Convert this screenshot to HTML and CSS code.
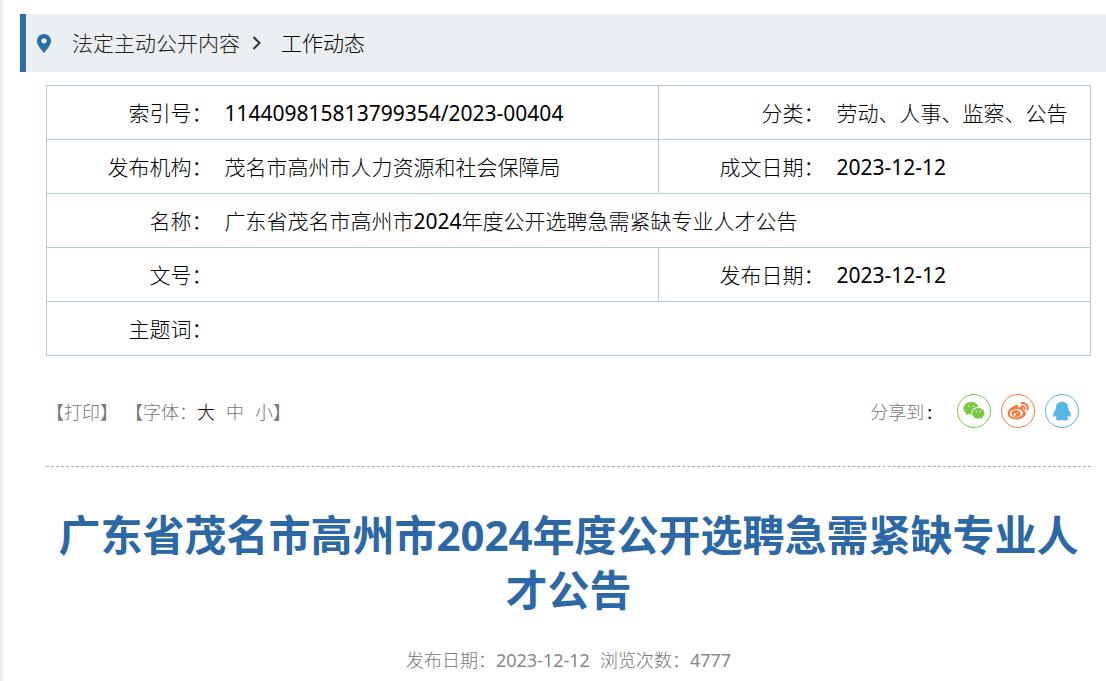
FILE: index.html
```html
<!DOCTYPE html>
<html lang="zh-CN">

<head>
    <meta charset="UTF-8">
    <title>广东省茂名市高州市2024年度公开选聘急需紧缺专业人才公告</title>
    <link rel="stylesheet" href="styles.css">
</head>

<body>
    <nav class="position">
        <svg class="pin" viewBox="0 0 14 19" aria-hidden="true">
            <path fill-rule="evenodd" d="M7 0C3.100 0 0 3 0 6.900c0 4.500 4.500 8.600 7 12.100 2.500-3.500 7-7.600 7-12.100C14 3 10.900 0 7 0zm0 4.200a2.600 2.600 0 1 1 0 5.200 2.600 2.600 0 0 1 0-5.200z"/>
        </svg>
        <a href="#" class="parent">法定主动公开内容</a>
        <svg class="arrow" viewBox="0 0 10 14" aria-hidden="true">
            <path d="M1.500 1l6 6-6 6"/>
        </svg>
        <a href="#" class="current">工作动态</a>
    </nav>

    <div class="content">
        <table class="classify">
            <colgroup>
                <col class="col-label">
                <col>
                <col class="col-label">
                <col class="col-side">
            </colgroup>
            <tr>
                <th scope="row">索引号：</th>
                <td class="num">114409815813799354/2023-00404</td>
                <th scope="row" class="split">分类：</th>
                <td>劳动、人事、监察、公告</td>
            </tr>
            <tr>
                <th scope="row">发布机构：</th>
                <td>茂名市高州市人力资源和社会保障局</td>
                <th scope="row" class="split">成文日期：</th>
                <td class="num">2023-12-12</td>
            </tr>
            <tr>
                <th scope="row">名称：</th>
                <td colspan="3">广东省茂名市高州市<span class="num">2024</span>年度公开选聘急需紧缺专业人才公告</td>
            </tr>
            <tr>
                <th scope="row">文号：</th>
                <td></td>
                <th scope="row" class="split">发布日期：</th>
                <td class="num">2023-12-12</td>
            </tr>
            <tr>
                <th scope="row">主题词：</th>
                <td colspan="3"></td>
            </tr>
        </table>

        <div class="tools">
            <div class="tools-left">
                <button type="button" onclick="window.print()">【打印】</button>
                <div class="font-size">
                    <span>【字体：</span>
                    <button type="button" class="active">大</button>
                    <button type="button">中</button>
                    <span><button type="button">小</button>】</span>
                </div>
            </div>
            <div class="share">
                <span class="share-label">分享到<b>:</b></span>
                <a href="#" class="share-icon wechat" aria-label="微信">
                    <svg viewBox="0 0 22 20">
                        <path fill-rule="evenodd" d="M8 1C3.600 1 .5 3.800.5 7.300c0 2 1.100 3.700 2.800 4.900l-.8 2.400 2.800-1.500c.9.300 1.800.4 2.700.4h.6C7.600 9 11 6 15.300 6h.3C15 3.100 11.900 1 8 1zM5.500 4.400a.8.800 0 1 1 0 1.600.8.800 0 0 1 0-1.600zm5 0a.8.800 0 1 1 0 1.600.8.800 0 0 1 0-1.600z"/>
                        <path fill-rule="evenodd" d="M15.300 6.900c-3.500 0-6.200 2.400-6.200 5.300s2.700 5.300 6.200 5.300c.7 0 1.500-.1 2.100-.4l2.300 1.300-.6-2.100c1.400-1 2.400-2.500 2.400-4.100 0-2.900-2.700-5.300-6.200-5.300zM13.200 9.800a.7.700 0 1 1 0 1.400.7.700 0 0 1 0-1.400zm4.100 0a.7.700 0 1 1 0 1.400.7.700 0 0 1 0-1.400z"/>
                    </svg>
                </a>
                <a href="#" class="share-icon weibo" aria-label="微博">
                    <svg viewBox="0 0 22 20">
                        <path fill-rule="evenodd" d="M8.500 4.300c1.600-.6 2.900.1 2.500 2.200 2.400-1 5-.9 4.500 1.300-.2.900.1 1.100 1 1.500 1.500.6 2.400 1.600 2.400 3 0 3.200-4.500 6.200-9.400 6.200-4.800 0-8.900-2.300-8.900-5.900C.6 9.200 5 5.300 8.500 4.300zM9 8.300c-3.800.2-6.300 2.300-6.100 4.700.2 2.300 3.200 3.800 6.800 3.500 3.700-.3 6.400-2.500 6.100-4.800-.2-2.300-3.300-3.600-6.800-3.400z"/>
                        <path fill-rule="evenodd" d="M9.500 9.300c-2.600-.2-4.800 1.300-5 3.300-.2 1.800 1.600 3.200 3.900 3.400 2.600.1 4.800-1.400 5-3.300.1-1.800-1.500-3.200-3.900-3.400zM7.800 12a1.400 1.400 0 1 1 0 2.800 1.400 1.400 0 0 1 0-2.800zm2.600-.7a.6.600 0 1 1 0 1.200.6.600 0 0 1 0-1.200z"/>
                        <path class="wave" d="M15 5.300c1.700-.3 2.900 1 2.500 2.700M14.600 2c4.100-.6 7 2.600 5.900 6.500"/>
                    </svg>
                </a>
                <a href="#" class="share-icon qq" aria-label="QQ">
                    <svg viewBox="0 0 22 20">
                        <path d="M11 .8C7.300.8 5 3.100 5 6.300c0 .6-.1 1-.3 1.500-.2.400-.3.800-.3 1.300-1.200 1.500-2.200 3.500-2.200 5.300 0 1.200.4 1.500.8 1.400.5-.1 1-.7 1.400-1.400.3 1 .8 1.900 1.500 2.600-.9.300-1.300.9-1.300 1.300 0 1.400 5.400 1.500 6.400.1 1 1.400 6.400 1.300 6.400-.1 0-.4-.4-1-1.300-1.300.7-.7 1.200-1.600 1.500-2.600.4.700.9 1.300 1.400 1.400.4.100.8-.2.800-1.400 0-1.800-1-3.800-2.200-5.300 0-.5-.1-.9-.3-1.300-.2-.5-.3-.9-.3-1.500C17 3.100 14.700.8 11 .8z"/>
                    </svg>
                </a>
            </div>
        </div>

        <h1 class="title">广东省茂名市高州市2024年度公开选聘急需紧缺专业人才公告</h1>
        <p class="date">
            <span>发布日期：<span class="num">2023-12-12</span></span>
            <span>浏览次数：<span class="num">4777</span></span>
        </p>
    </div>
</body>

</html>
```
FILE: styles.css
```css
body {
    margin: 0;
    padding-top: 14px;
    min-height: 100vh;
    box-sizing: border-box;
    border-left: 3px solid #f0f0f0;
    background: #fff;
    color: #000;
    font-family: "Noto Sans", "Noto Sans CJK SC", sans-serif;
    font-size: 21px;
    font-weight: 300;
}

a {
    color: inherit;
    text-decoration: none;
}

button {
    padding: 0;
    border: none;
    background: none;
    color: inherit;
    font: inherit;
    cursor: pointer;
}

.num {
    font-weight: 400;
}

/* breadcrumb */
.position {
    display: flex;
    align-items: center;
    height: 58px;
    margin-left: 17px;
    padding-left: 11px;
    border-left: 6px solid #2e6da4;
    background: #ebeff2;
    line-height: 32px;
}

.pin {
    width: 14px;
    height: 19px;
    margin-right: 21px;
    fill: #2e6da4;
}

.parent {
    color: #222;
}

.arrow {
    width: 10px;
    height: 14px;
    margin: 0 19px 0 12px;
    fill: none;
    stroke: #333;
    stroke-width: 2;
}

.content {
    margin: 13px 15px 0 43px;
}

/* document info */
.classify {
    width: 100%;
    table-layout: fixed;
    border-collapse: collapse;
    border: 1px solid #b0cbe0;
}

.col-label {
    width: 166px;
}

.col-side {
    width: 266px;
}

.classify th,
.classify td {
    height: 53px;
    padding: 0;
    border-bottom: 1px solid #b0cbe0;
    line-height: 32px;
}

.classify th {
    font-weight: inherit;
    text-align: right;
}

.classify td {
    padding-left: 12px;
}

.classify .split {
    border-left: 1px solid #b0cbe0;
}

/* print, font size and share */
.tools {
    display: flex;
    justify-content: space-between;
    align-items: center;
    height: 110px;
    padding-right: 12px;
    border-bottom: 1px dashed #aaa;
    color: #777;
    font-size: 18px;
}

.tools-left {
    display: flex;
    gap: 7px;
}

.font-size {
    display: flex;
}

.font-size button + button,
.font-size button + span {
    margin-left: 11px;
}

.font-size .active {
    color: #000;
}

.share {
    display: flex;
    align-items: center;
    gap: 10px;
}

.share-label {
    margin-right: 15px;
}

.share-label b {
    margin-left: 3px;
    color: #000;
}

.share-icon {
    display: flex;
    align-items: center;
    justify-content: center;
    width: 32px;
    height: 32px;
    border: 1px solid;
    border-radius: 50%;
}

.share-icon svg {
    width: 22px;
    height: 20px;
    fill: currentColor;
}

.wechat {
    color: #7ac943;
}

.weibo {
    color: #ff763b;
}

.qq {
    color: #56b6e7;
}

.share-icon .wave {
    fill: none;
    stroke: currentColor;
    stroke-width: 2;
    stroke-linecap: round;
}

/* article heading */
.title {
    margin: 40px 0 0;
    color: #2c67a6;
    font-size: 42px;
    line-height: 55px;
    text-align: center;
}

.date {
    display: flex;
    justify-content: center;
    gap: 10px;
    margin: 29px 0 0;
    color: #777;
    font-size: 18px;
    line-height: 28px;
}

.date .num {
    color: #888;
}
```
